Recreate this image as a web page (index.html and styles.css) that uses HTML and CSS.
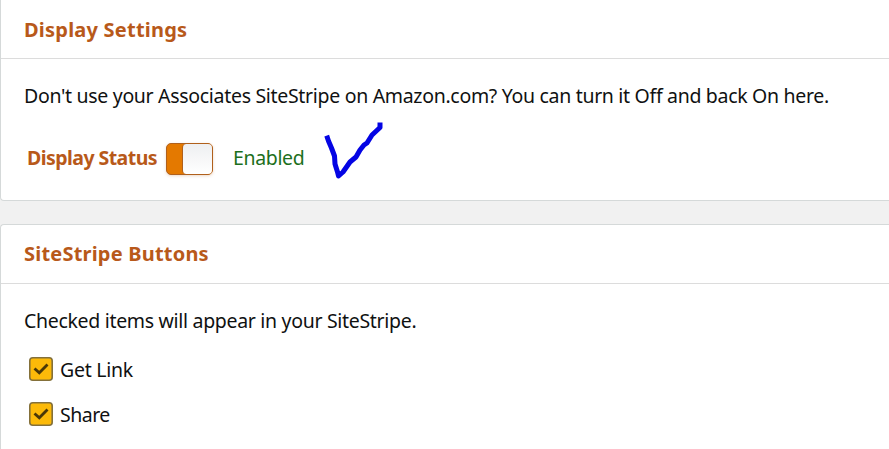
FILE: index.html
```html
<!doctype html>
<html lang="en">

<head>
<meta charset="utf-8">
<title>SiteStripe Settings</title>
<link rel="stylesheet" href="styles.css">
</head>

<body>

<div class="panel display-panel">
<h2 class="panel-title display-title">Display Settings</h2>
<div class="panel-body">
<p class="description">Don't use your Associates SiteStripe on Amazon.com? You can turn it Off and back On here.</p>
<div class="status-row">
<span class="status-label">Display Status</span>
<span class="toggle"><span class="toggle-knob"></span></span>
<span class="status-value">Enabled</span>
<svg class="ink-check" width="60" height="60" viewBox="0 0 60 60">
<path d="M4.500 17 L5.500 20 L8.500 27 L11.500 35 L12 43 L14.500 51 L15.500 55 L20 51 L27 41 L33 36 L37 29 L41 24 L44 22 L49 14 L57 6.500 L57 4"/>
</svg>
</div>
</div>
</div>

<div class="panel buttons-panel">
<h2 class="panel-title buttons-title">SiteStripe Buttons</h2>
<div class="panel-body">
<p class="description hint">Checked items will appear in your SiteStripe.</p>
<div class="option">
<svg class="checkbox" width="24" height="24" viewBox="0 0 24 24">
<rect x="0.800" y="0.800" width="22.400" height="22.400" rx="3"/>
<path d="M5.500 11.500 L10.300 15.800 L18.500 7.500"/>
</svg>
<span class="get-link">Get Link</span>
</div>
<div class="option">
<svg class="checkbox" width="24" height="24" viewBox="0 0 24 24">
<rect x="0.800" y="0.800" width="22.400" height="22.400" rx="3"/>
<path d="M5.500 11.500 L10.300 15.800 L18.500 7.500"/>
</svg>
<span class="share">Share</span>
</div>
</div>
</div>

</body>
</html>
```
FILE: styles.css
```css
body {
	margin: 0;
	height: 449px;
	overflow: hidden;
	background: #f1f1f1;
	color: #0f1111;
	font-family: "Noto Sans", "Open Sans", sans-serif;
	font-size: 19.5px;
	line-height: 28px;
	white-space: nowrap;
}

.panel {
	box-sizing: border-box;
	border: 1px solid #d5d9d9;
	border-right: none;
	background: white;
}

.display-panel {
	height: 201px;
	border-top: none;
	border-radius: 0 0 0 4px;
	margin-bottom: 23px;
}

.buttons-panel {
	height: 240px;
	border-radius: 4px 0 0 0;
}

.panel-title {
	box-sizing: border-box;
	height: 59px;
	margin: 0;
	padding: 15px 23px 0;
	border-bottom: 1px solid #dcdcdc;
	color: #b8591a;
	font-size: 20px;
	font-weight: bold;
}

.display-title {
	padding-top: 16px;
	letter-spacing: 0.22px;
}

.buttons-title {
	letter-spacing: 0.2px;
}

.panel-body {
	padding: 23px 23px 0;
}

.description {
	margin: 0;
	letter-spacing: -0.31px;
}

.status-row {
	display: flex;
	align-items: center;
	height: 60px;
	margin-top: 19px;
	padding-left: 3px;
}

.status-label {
	width: 139px;
	padding-bottom: 2px;
	color: #b8591a;
	font-weight: bold;
	letter-spacing: -0.55px;
}

.toggle {
	box-sizing: border-box;
	width: 47px;
	height: 32px;
	border: 1px solid #b0601c;
	border-radius: 5px;
	background: #e47900;
	box-shadow: 0 1px 3px rgba(180, 100, 30, 0.25);
}

.toggle-knob {
	display: block;
	box-sizing: border-box;
	height: 30px;
	margin-left: 15px;
	border-left: 1px solid #b0601c;
	border-radius: 4px;
	background: linear-gradient(#eeeff1, white);
}

.status-value {
	width: 90px;
	margin-left: 20px;
	padding-bottom: 2px;
	color: #1c6f1c;
	letter-spacing: -0.35px;
}

.ink-check {
	margin-bottom: 16px;
	fill: none;
	stroke: #0404e4;
	stroke-width: 5;
	stroke-linecap: square;
	stroke-linejoin: round;
}

.option {
	display: flex;
	align-items: center;
	gap: 7px;
	height: 24px;
	margin-bottom: 21px;
	padding-left: 5px;
}

.get-link {
	padding-top: 2px;
	letter-spacing: -0.25px;
}

.share {
	padding-top: 2px;
	letter-spacing: -0.5px;
}

.hint {
	margin-bottom: 22px;
}

.checkbox rect {
	fill: #fcba09;
	stroke: #84703a;
	stroke-width: 1.6;
}

.checkbox path {
	fill: none;
	stroke: #4a3808;
	stroke-width: 2.8;
}
```
